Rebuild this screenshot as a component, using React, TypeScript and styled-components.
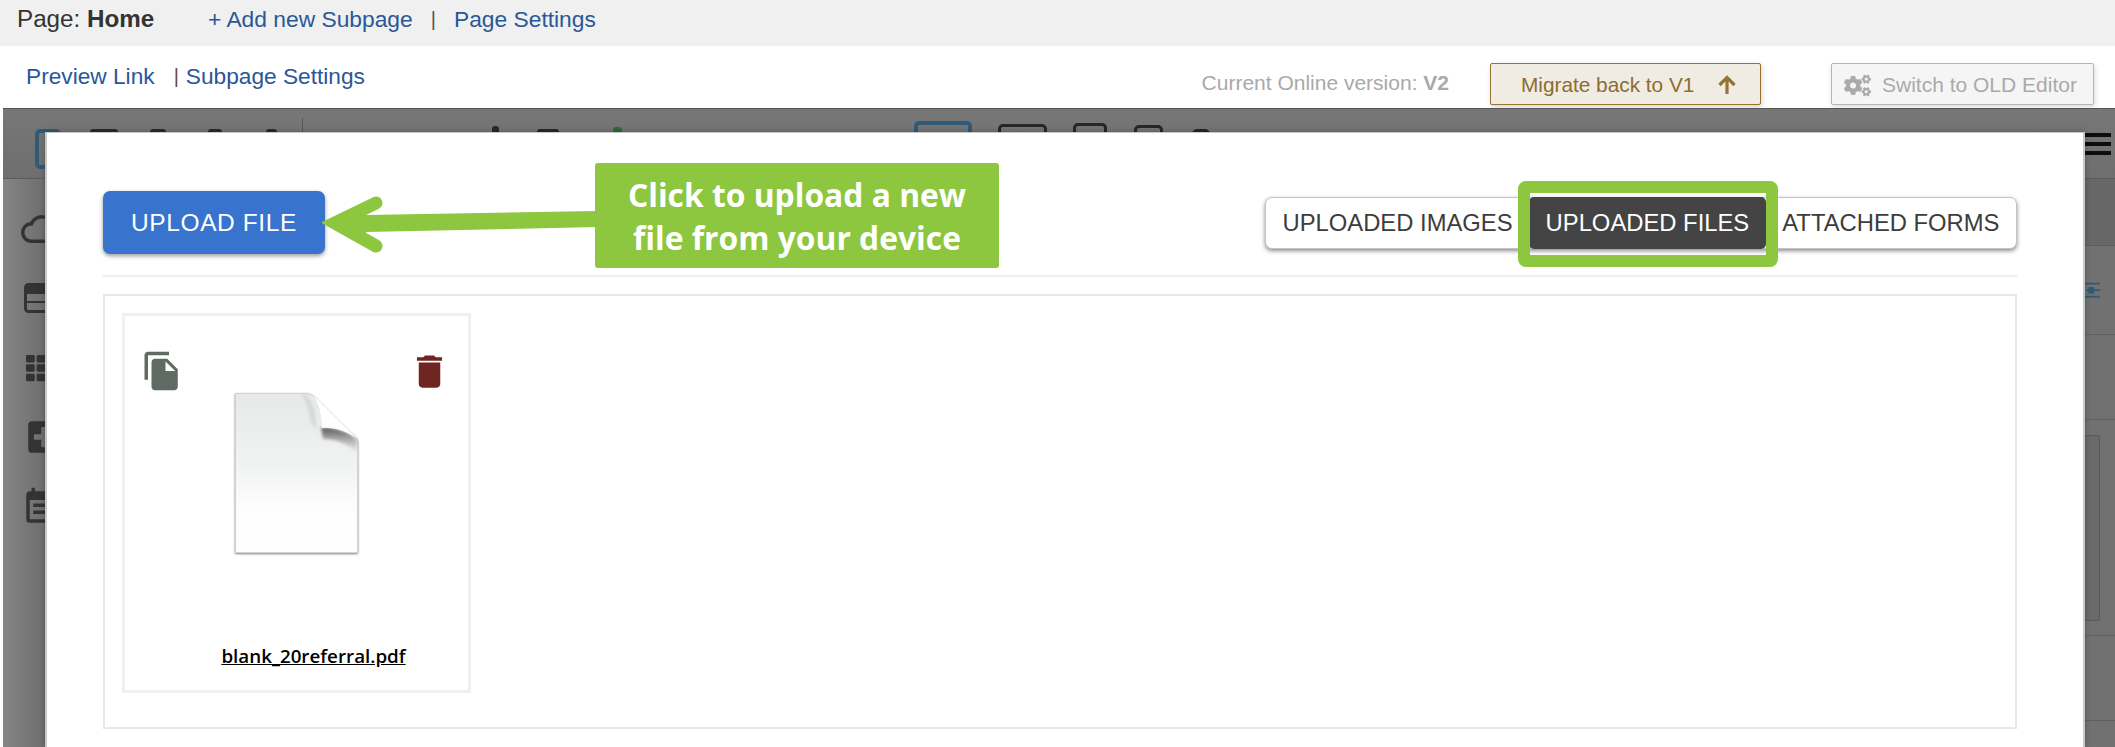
import React from 'react';
import styled, { createGlobalStyle } from 'styled-components';
import { FaCogs, FaPlusSquare, FaTh } from 'react-icons/fa';
import { MdCloudQueue, MdDelete, MdEventNote, MdFileCopy } from 'react-icons/md';

const GlobalStyle = createGlobalStyle`
  html, body {
    margin: 0;
    padding: 0;
    background: #fff;
    overflow: hidden;
  }
`;

const Page = styled.div`
  width: 2115px;
  height: 747px;
  display: flex;
  flex-direction: column;
  font-family: 'Liberation Sans', Arial, sans-serif;
  overflow: hidden;
`;

const TopBar = styled.div`
  display: flex;
  align-items: center;
  height: 46px;
  padding: 0 0 8px 17px;
  box-sizing: border-box;
  background: #f0f0f0;
  font-size: 22.8px;
  color: #333;
`;

const PageName = styled.span`
  width: 191px;
  font-size: 24.2px;
  strong {
    font-weight: 700;
  }
`;

const NavLink = styled.a`
  color: #2b5797;
  text-decoration: none;
  white-space: nowrap;
`;

const Pipe = styled.span<{ $color?: string; $left: number; $right: number }>`
  color: ${(p) => p.$color ?? '#555'};
  margin: 0 ${(p) => p.$right}px 0 ${(p) => p.$left}px;
  font-size: 20px;
`;

const SubBar = styled.div`
  display: flex;
  align-items: flex-start;
  height: 62px;
  padding: 0 21px 0 26px;
  box-sizing: border-box;
  font-size: 22.7px;
`;

const SubLinks = styled.div`
  display: flex;
  align-items: center;
  height: 60px;
  margin-right: auto;
`;

const VersionNote = styled.div`
  margin: 25px 41px 0 0;
  font-size: 21px;
  line-height: 24px;
  color: #a9a9a9;
  strong {
    font-weight: 700;
  }
`;

const MigrateButton = styled.button`
  display: flex;
  align-items: center;
  width: 271px;
  height: 42px;
  margin: 17px 70px 0 0;
  padding: 2px 0 0 30px;
  box-sizing: border-box;
  background: #f0ebe3;
  border: 1px solid #96732f;
  border-radius: 2px;
  box-shadow: 1px 2px 5px rgba(0, 0, 0, 0.18);
  font-family: inherit;
  font-size: 20.8px;
  color: #8c6d2f;
`;

const MigrateArrow = styled.svg`
  margin: -2px 0 0 24px;
`;

const SwitchButton = styled.button`
  display: flex;
  align-items: center;
  gap: 11px;
  width: 263px;
  height: 42px;
  margin-top: 17px;
  padding: 2px 0 0 12px;
  box-sizing: border-box;
  background: #f5f5f5;
  border: 1px solid #b5b5b5;
  border-radius: 2px;
  box-shadow: 1px 2px 5px rgba(0, 0, 0, 0.15);
  font-family: inherit;
  font-size: 21px;
  color: #aaa;
`;

const Workspace = styled.div`
  position: relative;
  flex: 1;
  margin-left: 3px;
  background: #717171;
  border-top: 1px solid #555;
  overflow: hidden;
`;

const EditorToolbar = styled.div`
  display: flex;
  align-items: flex-start;
  height: 69px;
  border-bottom: 1px solid #5c5c5c;
  background: linear-gradient(#777, #6e6e6e);
`;

const ToolFrame = styled.div<{ $left: number; $top: number; $w: number; $blue?: boolean }>`
  flex: none;
  width: ${(p) => p.$w}px;
  height: 40px;
  margin: ${(p) => p.$top}px 0 0 ${(p) => p.$left}px;
  box-sizing: border-box;
  border: ${(p) => (p.$blue ? 4 : 3)}px solid ${(p) => (p.$blue ? '#2f5a78' : '#262626')};
  border-radius: 5px;
`;

const ToolGlyph = styled.div<{ $left: number; $top: number; $w: number; $color?: string }>`
  flex: none;
  width: ${(p) => p.$w}px;
  height: 12px;
  margin: ${(p) => p.$top}px 0 0 ${(p) => p.$left}px;
  background: ${(p) => p.$color ?? '#2a2a2a'};
  border-radius: 3px 3px 0 0;
`;

const ToolDivider = styled.div`
  flex: none;
  width: 1px;
  height: 40px;
  margin: 9px 0 0 25px;
  background: #555;
`;

const Hamburger = styled.div`
  display: flex;
  flex-direction: column;
  gap: 5px;
  width: 26px;
  margin: 24px 4px 0 auto;
  span {
    height: 4px;
    background: #0d0d0d;
  }
`;

const WorkBody = styled.div`
  display: flex;
  height: 569px;
`;

const Sidebar = styled.div`
  display: flex;
  flex-direction: column;
  width: 60px;
  padding: 15px 0 0 18px;
  box-sizing: border-box;
  background: linear-gradient(90deg, #848484, #6a6a6a 50px);
  color: #333;
`;

const SideSlot = styled.div<{ $inset: number }>`
  display: flex;
  align-items: center;
  height: 69.5px;
  padding-left: ${(p) => p.$inset}px;
`;

const RightStrip = styled.div`
  display: flex;
  flex-direction: column;
  width: 31px;
  margin-left: auto;
`;

const StripRow = styled.div<{ $h: number; $dark?: boolean }>`
  flex: none;
  display: flex;
  align-items: center;
  justify-content: flex-end;
  height: ${(p) => p.$h}px;
  padding-right: 15px;
  box-sizing: border-box;
  background: ${(p) => (p.$dark ? '#676767' : 'transparent')};
  border-bottom: 1px solid #5e5e5e;
`;

const StripBox = styled.div`
  width: 16px;
  height: 186px;
  box-sizing: border-box;
  border: 1px solid #5a5a5a;
  border-left: none;
  background: #6a6a6a;
`;

const Modal = styled.div`
  position: absolute;
  top: 23px;
  left: 42px;
  right: 30px;
  bottom: 0;
  padding: 58px 66px 0 56px;
  background: #fff;
  border: solid #c8c8c8;
  border-width: 1px 2px 0 2px;
  box-shadow: 0 0 6px rgba(0, 0, 0, 0.25);
`;

const ModalHeader = styled.div`
  display: flex;
  align-items: center;
  justify-content: space-between;
  padding-bottom: 21px;
  border-bottom: 2px solid #eee;
`;

const UploadButton = styled.button`
  width: 222px;
  height: 63px;
  padding: 0;
  border: none;
  border-radius: 7px;
  background: #3873cd;
  box-shadow: 0 2px 4px rgba(0, 0, 0, 0.4);
  font-family: inherit;
  font-size: 24.5px;
  letter-spacing: 0.6px;
  color: #fff;
`;

const TabGroup = styled.div`
  display: flex;
  height: 52px;
  box-sizing: border-box;
  background: #fff;
  border: 1px solid #c4c4c4;
  border-radius: 7px;
  box-shadow: 0 2px 4px rgba(0, 0, 0, 0.45);
`;

const Tab = styled.button<{ $active?: boolean }>`
  height: 52px;
  margin-top: -1px;
  padding: 0 16.5px;
  border: none;
  border-radius: 5px;
  background: ${(p) => (p.$active ? '#444' : 'transparent')};
  font-family: inherit;
  font-size: 23.8px;
  color: ${(p) => (p.$active ? '#fff' : '#3c3c3c')};
  white-space: nowrap;
`;

const Callout = styled.div`
  position: absolute;
  top: 30px;
  left: 548px;
  width: 404px;
  height: 105px;
  display: flex;
  align-items: center;
  justify-content: center;
  border-radius: 3px;
  background: #8dc63f;
  font-family: 'Open Sans', sans-serif;
  font-weight: 700;
  font-size: 31.8px;
  line-height: 43px;
  color: #fff;
  text-align: center;
`;

const CalloutArrow = styled.svg`
  position: absolute;
  top: 57px;
  left: 275px;
`;

const TabHighlight = styled.div`
  position: absolute;
  top: 48px;
  left: 1471px;
  width: 260px;
  height: 86px;
  box-sizing: border-box;
  border: 12px solid #8dc63f;
  border-radius: 8px;
`;

const FileArea = styled.div`
  height: 435px;
  margin-top: 17px;
  padding: 17px;
  box-sizing: border-box;
  border: 2px solid #e8e8e8;
`;

const FileCard = styled.div`
  width: 349px;
  height: 380px;
  box-sizing: border-box;
  border: 3px solid #f0f0f0;
  display: flex;
  flex-direction: column;
  align-items: center;
`;

const CardActions = styled.div`
  display: flex;
  justify-content: space-between;
  align-self: stretch;
  padding: 34px 17px 0 16px;
`;

const CopyIcon = styled(MdFileCopy)`
  color: #5f6a63;
`;

const TrashIcon = styled(MdDelete)`
  color: #6f2623;
`;

const PaperIcon = styled.svg`
  filter: drop-shadow(0 1px 1px rgba(0, 0, 0, 0.5));
`;

const FileName = styled.a`
  margin: 90px 0 0 34px;
  font-family: 'Open Sans', sans-serif;
  font-weight: 600;
  font-size: 18.8px;
  line-height: 26px;
  color: #000;
  text-decoration: underline;
`;

const TableIcon = () => (
  <svg width="34" height="30" viewBox="0 0 34 30">
    <rect x="1.5" y="1.5" width="31" height="27" rx="3" fill="none" stroke="currentColor" strokeWidth="3" />
    <rect x="2" y="2" width="30" height="9" fill="currentColor" />
    <rect x="2" y="18" width="30" height="2" fill="currentColor" />
  </svg>
);

const SliderIcon = () => (
  <svg width="22" height="24" viewBox="0 0 22 24" fill="#2f5a78">
    <rect x="0" y="2" width="22" height="2.5" />
    <rect x="3" y="11" width="19" height="2.5" />
    <rect x="6" y="8" width="8" height="9" rx="1" />
    <rect x="0" y="20" width="22" height="2.5" />
  </svg>
);

const PaperGraphic = () => (
  <PaperIcon width="123" height="160" viewBox="0 0 123 160">
    <defs>
      <linearGradient id="paperFill" x1="0" y1="0" x2="0" y2="1">
        <stop offset="0" stopColor="#e7e8e8" />
        <stop offset="0.45" stopColor="#f1f2f2" />
        <stop offset="0.72" stopColor="#fdfdfd" />
        <stop offset="1" stopColor="#ffffff" />
      </linearGradient>
      <linearGradient id="foldShade" x1="0" y1="0" x2="0" y2="1">
        <stop offset="0" stopColor="#5a5a5a" />
        <stop offset="1" stopColor="#8c8c8c" stopOpacity="0" />
      </linearGradient>
      <filter id="foldBlur" x="-30%" y="-30%" width="160%" height="160%">
        <feGaussianBlur stdDeviation="1.5" />
      </filter>
    </defs>
    <path
      d="M0.5 0.5H70C78 0.5 81 5 85 10L122.5 47V159.5H0.5Z"
      fill="url(#paperFill)"
      stroke="#d2d2d2"
      strokeWidth="1"
    />
    <path d="M70 1C78 8 81 22 82 36L76 30C74 18 72 8 66 1Z" fill="#cfd0d0" opacity="0.7" filter="url(#foldBlur)" />
    <path d="M86 35C100 34 114 39 122 47L122 60C112 50 100 46 88 46Z" fill="url(#foldShade)" filter="url(#foldBlur)" />
    <path d="M78 2L122.5 46C110 37 98 34 87 35C87 22 84 10 78 2Z" fill="#fff" />
  </PaperIcon>
);

const App = () => (
  <Page>
    <GlobalStyle />
    <TopBar>
      <PageName>
        Page: <strong>Home</strong>
      </PageName>
      <NavLink>+ Add new Subpage</NavLink>
      <Pipe $left={18} $right={18}>|</Pipe>
      <NavLink>Page Settings</NavLink>
    </TopBar>
    <SubBar>
      <SubLinks>
        <NavLink>Preview Link</NavLink>
        <Pipe $color="#6e4a3a" $left={19} $right={7}>|</Pipe>
        <NavLink>Subpage Settings</NavLink>
      </SubLinks>
      <VersionNote>
        Current Online version: <strong>V2</strong>
      </VersionNote>
      <MigrateButton>
        Migrate back to V1
        <MigrateArrow width="18" height="19" viewBox="0 0 18 19" fill="none" stroke="#96732f" strokeWidth="3.2">
          <path d="M9 19V3" />
          <path d="M1.5 10L9 2.5L16.5 10" />
        </MigrateArrow>
      </MigrateButton>
      <SwitchButton>
        <FaCogs size={27} />
        Switch to OLD Editor
      </SwitchButton>
    </SubBar>
    <Workspace>
      <EditorToolbar>
        <ToolFrame $blue $left={32} $top={20} $w={26} />
        <ToolGlyph $left={29} $top={20} $w={28} />
        <ToolGlyph $left={32} $top={20} $w={16} />
        <ToolGlyph $left={42} $top={20} $w={14} />
        <ToolGlyph $left={44} $top={20} $w={11} />
        <ToolDivider />
        <ToolGlyph $left={189} $top={17} $w={7} />
        <ToolGlyph $left={38} $top={20} $w={22} />
        <ToolGlyph $left={54} $top={18} $w={9} $color="#2e6b3a" />
        <ToolFrame $blue $left={292} $top={12} $w={58} />
        <ToolFrame $left={26} $top={15} $w={49} />
        <ToolFrame $left={26} $top={14} $w={34} />
        <ToolFrame $left={27} $top={16} $w={29} />
        <ToolFrame $left={29} $top={20} $w={18} />
        <Hamburger>
          <span />
          <span />
          <span />
        </Hamburger>
      </EditorToolbar>
      <WorkBody>
        <Sidebar>
          <SideSlot $inset={0}>
            <MdCloudQueue size={42} />
          </SideSlot>
          <SideSlot $inset={3}>
            <TableIcon />
          </SideSlot>
          <SideSlot $inset={5}>
            <FaTh size={30} />
          </SideSlot>
          <SideSlot $inset={5}>
            <FaPlusSquare size={36} />
          </SideSlot>
          <SideSlot $inset={0}>
            <MdEventNote size={42} />
          </SideSlot>
        </Sidebar>
        <RightStrip>
          <StripRow $h={67} $dark />
          <StripRow $h={89}>
            <SliderIcon />
          </StripRow>
          <StripRow $h={85} />
          <StripRow $h={216}>
            <StripBox />
          </StripRow>
          <StripRow $h={85} />
        </RightStrip>
      </WorkBody>
      <Modal>
        <ModalHeader>
          <UploadButton>UPLOAD FILE</UploadButton>
          <TabGroup>
            <Tab>UPLOADED IMAGES</Tab>
            <Tab $active>UPLOADED FILES</Tab>
            <Tab>ATTACHED FORMS</Tab>
          </TabGroup>
        </ModalHeader>
        <CalloutArrow width="280" height="66" viewBox="0 0 280 66">
          <polygon points="8,33 44,18 44,25 275,21 275,37 44,42 44,50" fill="#8dc63f" />
          <polyline
            points="54,13 13,33 54,56"
            fill="none"
            stroke="#8dc63f"
            strokeWidth="13"
            strokeLinecap="round"
            strokeLinejoin="miter"
          />
        </CalloutArrow>
        <Callout>
          Click to upload a new
          <br />
          file from your device
        </Callout>
        <TabHighlight />
        <FileArea>
          <FileCard>
            <CardActions>
              <CopyIcon size={42} />
              <TrashIcon size={43} />
            </CardActions>
            <PaperGraphic />
            <FileName>blank_20referral.pdf</FileName>
          </FileCard>
        </FileArea>
      </Modal>
    </Workspace>
  </Page>
);

export default App;
